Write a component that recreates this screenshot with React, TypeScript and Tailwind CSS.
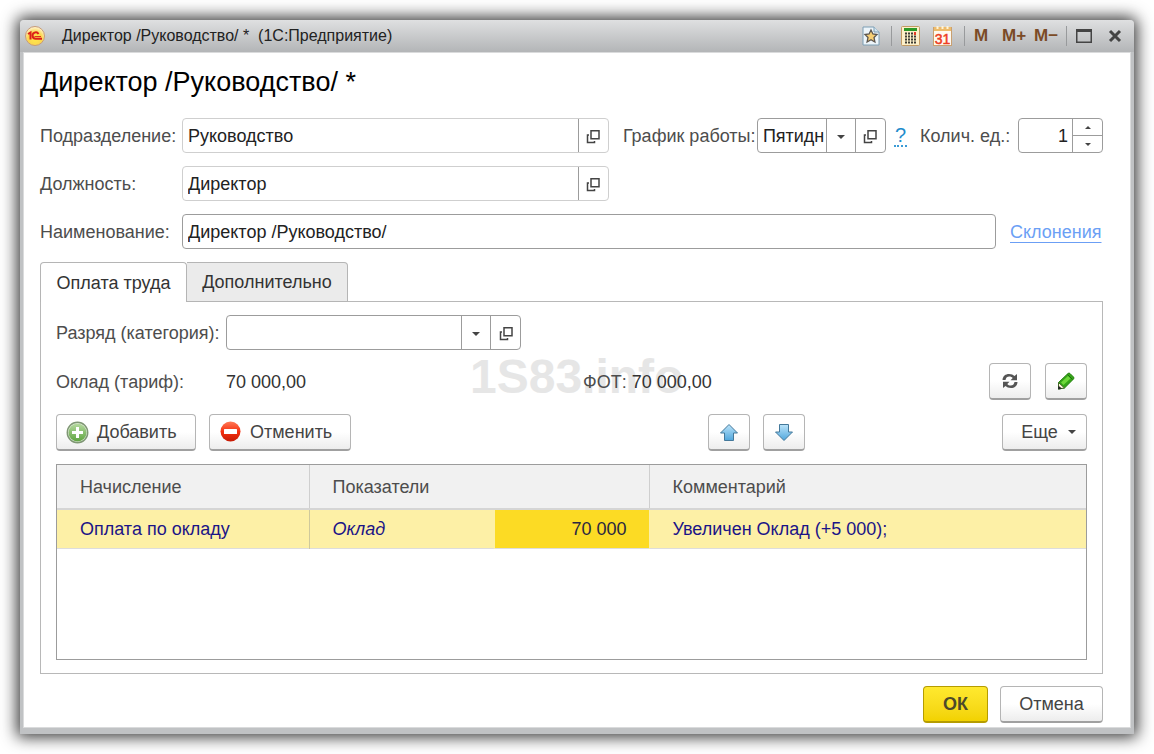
import React from 'react';

const FIELD = 'flex h-[35px] rounded-[4px] border bg-white text-[#222]';
const BUTTON =
  'flex h-[37px] items-center rounded-[4px] border border-[#b5b5b5] border-b-2 border-b-[#a0a0a0] bg-gradient-to-b from-white from-50% to-[#ededed] text-[#444]';

export default function App() {
  return (
    <div className="bg-white p-5 font-['Liberation_Sans',Arial,sans-serif] text-[18px] leading-[22px] text-[#4d4d4d]">
      <div className="rounded-t-[4px] bg-[#c0c2c4] px-[3px] pb-[6px] shadow-[0_0_16px_3px_rgba(0,0,0,0.8)]">
        <TitleBar />

        <main className="border border-[#dadbdc] bg-white pr-[27px] pb-1 pl-4">
          <h1 className="pt-[13px] text-[27px] leading-8 text-black">Директор /Руководство/ *</h1>

          {/* Position fields */}
          <div className="mt-5 flex">
            <div className="flex flex-1 flex-col gap-[13px]">
              <div className="flex items-center">
                <label htmlFor="department" className="w-[142px]">Подразделение:</label>
                <OpenField id="department" value="Руководство" />
              </div>
              <div className="flex items-center">
                <label htmlFor="position" className="w-[142px]">Должность:</label>
                <OpenField id="position" value="Директор" />
              </div>
            </div>
            <div className="flex h-[35px] items-center">
              <label htmlFor="schedule" className="ml-[14px] w-[134px]">График работы:</label>
              <div className={`${FIELD} w-[129px] border-[#9c9c9c]`}>
                <Dropdown id="schedule" value="Пятидн" />
                <OpenButton label="Открыть график" />
              </div>
              <a href="#help" className="ml-2 border-b-2 border-dotted border-[#3b9bd6] px-px text-[20px] leading-5 text-[#1f8ccc]">?</a>
              <label htmlFor="count" className="ml-[13px] w-[98px]">Колич. ед.:</label>
              <div className={`${FIELD} w-[85px] border-[#9c9c9c]`}>
                <input id="count" type="text" defaultValue="1" className="w-full min-w-0 flex-1 px-1 text-right outline-none" />
                <div className="flex w-[30px] flex-col border-l border-[#9c9c9c]">
                  <button aria-label="Больше" className="flex flex-1 items-center justify-center border-b border-[#9c9c9c]">
                    <svg width="6" height="3" viewBox="0 0 6 3"><path d="M0 3L3 0L6 3Z" fill="#444" /></svg>
                  </button>
                  <button aria-label="Меньше" className="flex flex-1 items-center justify-center">
                    <svg width="6" height="3" viewBox="0 0 6 3"><path d="M0 0L3 3L6 0Z" fill="#444" /></svg>
                  </button>
                </div>
              </div>
            </div>
          </div>

          <div className="mt-[13px] flex items-center">
            <label htmlFor="name" className="w-[142px]">Наименование:</label>
            <div className={`${FIELD} flex-1 border-[#9c9c9c]`}>
              <input id="name" type="text" defaultValue="Директор /Руководство/" className="w-full rounded-[4px] px-[5px] outline-none" />
            </div>
            <a href="#declension" className="ml-[14px] w-[93px] text-[#6b9ff5] underline underline-offset-4">Склонения</a>
          </div>

          {/* Tabs */}
          <div role="tablist" className="relative mt-[13px] -mb-px flex h-10 text-[#333]">
            <button role="tab" aria-selected="true" className="w-[147px] rounded-t-[4px] border border-b-0 border-[#b5b5b5] bg-white">
              Оплата труда
            </button>
            <button role="tab" aria-selected="false" className="w-[161px] rounded-tr-[4px] border border-l-0 border-[#b5b5b5] bg-[#ebebeb]">
              Дополнительно
            </button>
          </div>

          <section className="border border-[#b8b8b8] px-[15px] pt-[13px] pb-[13px]">
            <div className="flex items-center">
              <label htmlFor="grade" className="w-[170px]">Разряд (категория):</label>
              <div className={`${FIELD} w-[295px] border-[#9c9c9c]`}>
                <Dropdown id="grade" value="" />
                <OpenButton label="Открыть разряд" />
              </div>
            </div>

            <div className="relative mt-[13px] flex items-center">
              <span aria-hidden="true" className="absolute -top-[13px] left-[414px] text-[48px] leading-[54px] font-bold text-[#e6e6e6]">
                1S83.info
              </span>
              <span className="w-[170px]">Оклад (тариф):</span>
              <span className="w-[357px] text-[#333]">70 000,00</span>
              <span className="relative flex-1">
                ФОТ: <span className="text-[#333]">70 000,00</span>
              </span>
              <button aria-label="Обновить" className={`${BUTTON} w-[42px] justify-center`}><RefreshIcon /></button>
              <button aria-label="Изменить" className={`${BUTTON} ml-[14px] w-[42px] justify-center`}><PencilIcon /></button>
            </div>

            <div className="mt-[14px] flex items-center">
              <button className={`${BUTTON} w-[140px] gap-2 pl-[9px]`}><AddIcon />Добавить</button>
              <button className={`${BUTTON} ml-[13px] w-[142px] gap-2 pl-[9px]`}><CancelIcon />Отменить</button>
              <div className="flex flex-1 justify-end gap-[13px] pr-[197px]">
                <button aria-label="Вверх" className={`${BUTTON} w-[42px] justify-center`}><ArrowIcon /></button>
                <button aria-label="Вниз" className={`${BUTTON} w-[42px] justify-center`}><ArrowIcon down /></button>
              </div>
              <button className={`${BUTTON} w-[85px] justify-center gap-[10px] pl-2`}>Еще<Caret /></button>
            </div>

            {/* Accruals */}
            <div className="mt-[13px] h-[196px] border border-[#9c9c9c] bg-white">
              <table className="w-full table-fixed border-collapse text-left">
                <colgroup>
                  <col className="w-[252px]" />
                  <col className="w-[185px]" />
                  <col className="w-[155px]" />
                  <col />
                </colgroup>
                <thead>
                  <tr className="h-[44px] border-b-2 border-[#d5d5d5] bg-[#f1f1f1]">
                    <th className="border-r border-[#cfcfcf] pl-[23px] font-normal">Начисление</th>
                    <th colSpan={2} className="border-r border-[#cfcfcf] pl-[23px] font-normal">Показатели</th>
                    <th className="pl-[23px] font-normal">Комментарий</th>
                  </tr>
                </thead>
                <tbody>
                  <tr className="h-[39px] border-b border-[#dddddd] bg-[#fdf0a6] text-[#1b1487]">
                    <td className="border-r border-[#cfc99c] pl-[23px]">Оплата по окладу</td>
                    <td className="pl-[23px] italic">Оклад</td>
                    <td className="border-x border-[#fdf0a6] bg-[#fcdb24] pr-[22px] text-right text-[#2b2740]">70 000</td>
                    <td className="pl-[23px]">Увеличен Оклад (+5 000);</td>
                  </tr>
                </tbody>
              </table>
            </div>
          </section>

          <div className="mt-3 flex justify-end gap-3">
            <button className="h-[37px] w-[65px] rounded-[4px] border border-b-2 border-[#b59c00] bg-gradient-to-b from-[#ffe92e] to-[#f2d200] font-bold text-[#4d4a2a]">
              ОК
            </button>
            <button className={`${BUTTON} w-[103px] justify-center`}>Отмена</button>
          </div>
        </main>
      </div>
    </div>
  );
}

function TitleBar() {
  return (
    <header className="-mx-[3px] flex h-8 items-center rounded-t-[4px] bg-gradient-to-b from-[#dfe0e1] to-[#b3b5b7] pr-3 pl-1 text-[#222]">
      <svg width="22" height="22" viewBox="0 0 22 22">
        <defs>
          <radialGradient id="logo" cx="50%" cy="65%" r="60%">
            <stop offset="0" stopColor="#ffe94a" />
            <stop offset="0.6" stopColor="#fbd64e" />
            <stop offset="1" stopColor="#fff1c4" />
          </radialGradient>
        </defs>
        <circle cx="11" cy="11" r="9.5" fill="url(#logo)" stroke="#c79a78" />
        <path d="M4 9L6.500 7.500V14.500" fill="none" stroke="#dc1f1a" strokeWidth="2" />
        <path d="M14.500 9A3.200 3.200 0 1 0 12 13.800H18" fill="none" stroke="#dc1f1a" strokeWidth="2" />
        <path d="M10.500 11.600H17" stroke="#dc1f1a" strokeWidth="1" />
      </svg>
      <span className="ml-4 flex-1 text-[16px] whitespace-pre">Директор /Руководство/ *  (1С:Предприятие)</span>

      <div className="flex items-center">
        <button aria-label="В избранное">
          <svg width="18" height="20" viewBox="0 0 18 20">
            <path d="M1 1H12L17 6V19H1Z" fill="#edf5fa" stroke="#7c9eb4" />
            <path d="M12 1V6H17" fill="#d5e6f0" stroke="#7c9eb4" />
            <path d="M9 4L10.900 8L15 8.500L12 11.500L12.900 16L9 13.700L5.100 16L6 11.500L3 8.500L7.100 8Z" fill="#f7cf74" stroke="#5c5650" strokeWidth="1.300" />
          </svg>
        </button>
        <Divider className="ml-[11px] mr-[9px]" />
        <button aria-label="Калькулятор">
          <svg width="19" height="20" viewBox="0 0 19 20">
            <rect x="0.500" y="0.500" width="18" height="19" rx="1" fill="#fdf0c9" stroke="#c39b63" />
            <rect x="3" y="2" width="13" height="3" fill="#2b9926" />
            <path d="M4 7.500H12M4 10.500H15M4 13.500H15M4 16.500H15" stroke="#3d3d35" strokeWidth="2" strokeDasharray="2 1" />
            <rect x="13" y="6" width="2" height="3" fill="#e33d24" />
          </svg>
        </button>
        <button aria-label="Календарь" className="ml-[13px]">
          <svg width="19" height="20" viewBox="0 0 19 20">
            <rect x="0.500" y="1.500" width="18" height="18" fill="#fffaf0" stroke="#c9a071" />
            <rect x="1" y="1" width="17" height="4" fill="#edbb6a" />
            <path d="M4.500 0V3M9.500 0V3M14.500 0V3" stroke="#fff3d6" strokeWidth="2" />
            <text x="9.500" y="17.500" textAnchor="middle" fontSize="14" fontFamily="Liberation Sans" fill="#ee3d22" stroke="#ee3d22" strokeWidth="0.500">31</text>
          </svg>
        </button>
        <Divider className="ml-3 mr-[9px]" />
        <button className="w-5 text-left text-[17px] font-bold text-[#7b4b27]">M</button>
        <button className="ml-2 w-7 text-left text-[17px] font-bold text-[#7b4b27]">M+</button>
        <button className="ml-1 w-6 text-left text-[17px] font-bold whitespace-nowrap text-[#7b4b27]">M−</button>
        <Divider className="ml-2 mr-[9px]" />
        <button aria-label="Развернуть">
          <svg width="16" height="14" viewBox="0 0 16 14">
            <path d="M0.750 1V13.250H15.250V1" fill="none" stroke="#444" strokeWidth="1.500" />
            <path d="M0 1.500H16" stroke="#444" strokeWidth="3" />
          </svg>
        </button>
        <button aria-label="Закрыть" className="ml-4">
          <svg width="14" height="14" viewBox="0 0 14 14">
            <path d="M2 2L12 12M12 2L2 12" stroke="#444" strokeWidth="3" />
          </svg>
        </button>
      </div>
    </header>
  );
}

function Divider({ className }: { className: string }) {
  return <span className={`h-5 w-px bg-[#989a9c] ${className}`} />;
}

function OpenField({ id, value }: { id: string; value: string }) {
  return (
    <div className={`${FIELD} flex-1 border-[#cfcfcf]`}>
      <input id={id} type="text" defaultValue={value} className="w-full min-w-0 flex-1 rounded-l-[4px] px-[5px] outline-none" />
      <OpenButton label="Открыть" />
    </div>
  );
}

function OpenButton({ label }: { label: string }) {
  return (
    <button aria-label={label} className="flex w-[30px] shrink-0 items-center justify-center border-l border-[#9c9c9c] pt-[3px]">
      <svg width="14" height="14" viewBox="0 0 14 14" fill="none" stroke="#444" strokeWidth="1.500">
        <rect x="5" y="0.750" width="8" height="8" />
        <path d="M3 5H1.500V12.500H8.500V11" />
      </svg>
    </button>
  );
}

function Dropdown({ id, value }: { id: string; value: string }) {
  return (
    <div className="relative min-w-0 flex-1">
      <select id={id} defaultValue={value} className="h-full w-full appearance-none rounded-l-[4px] pr-[29px] pl-[5px] outline-none">
        <option value={value}>{value}</option>
      </select>
      <span className="pointer-events-none absolute inset-y-0 right-0 flex w-[29px] items-center justify-center border-l border-[#9c9c9c] pt-[3px]">
        <Caret />
      </span>
    </div>
  );
}

function Caret() {
  return (
    <svg width="8" height="4" viewBox="0 0 8 4">
      <path d="M0 0H8L4 4Z" fill="#444" />
    </svg>
  );
}

function RefreshIcon() {
  return (
    <svg width="16" height="16" viewBox="0 0 16 16">
      <path d="M0.500 7C0.800 3 3.500 1 7 1C9.500 1 11.200 1.800 12.500 3L15 1V7.200H8.500L10.700 5C9.800 4 8.700 3.500 7.300 3.500C5.200 3.500 4 4.500 3.500 7Z" fill="#555" />
      <path d="M15.500 9C15.200 13 12.500 15 9 15C6.500 15 4.800 14.200 3.500 13L1 15V8.800H7.500L5.300 11C6.200 12 7.300 12.500 8.700 12.500C10.800 12.500 12 11.500 12.500 9Z" fill="#555" />
    </svg>
  );
}

function PencilIcon() {
  return (
    <svg width="18" height="18" viewBox="0 0 18 18">
      <path d="M1.500 10.500L11 1.500Q12 0.500 13 1.500L16.500 5Q17.500 6 16.500 7L7.500 16L1.500 17Z" fill="#35a518" stroke="#25820f" />
      <path d="M4 10.500L11 4L13.500 6.500L6.500 13Z" fill="#6fd83a" />
      <path d="M1.500 10.500L7.500 16L1.500 17Z" fill="#fff3dd" stroke="#3f6b25" />
      <path d="M1 17.500L1.500 13.800L5 16.600Z" fill="#222" />
      <path d="M10.500 2.500L15.500 7.500" stroke="#1c6e0c" />
    </svg>
  );
}

function AddIcon() {
  return (
    <svg width="23" height="23" viewBox="0 0 23 23">
      <defs>
        <linearGradient id="add" x1="0" y1="0" x2="0" y2="1">
          <stop offset="0" stopColor="#b5d9a0" />
          <stop offset="1" stopColor="#5fa540" />
        </linearGradient>
      </defs>
      <circle cx="11.500" cy="11.500" r="10.200" fill="#e6f0df" stroke="#7f9774" strokeWidth="1.500" />
      <circle cx="11.500" cy="11.500" r="9" fill="url(#add)" />
      <path d="M11.500 6V17M6 11.500H17" stroke="#fff" strokeWidth="3" />
    </svg>
  );
}

function CancelIcon() {
  return (
    <svg width="23" height="23" viewBox="0 0 23 23">
      <defs>
        <linearGradient id="cancel" x1="0" y1="0" x2="0" y2="1">
          <stop offset="0" stopColor="#ff7a58" />
          <stop offset="0.5" stopColor="#f5300f" />
          <stop offset="1" stopColor="#c61a04" />
        </linearGradient>
      </defs>
      <circle cx="11.500" cy="10.500" r="10" fill="url(#cancel)" />
      <rect x="5" y="8" width="13" height="5" rx="0.500" fill="#fff" />
    </svg>
  );
}

function ArrowIcon({ down }: { down?: boolean }) {
  return (
    <svg width="20" height="19" viewBox="0 0 20 19">
      <defs>
        <linearGradient id="arrow" x1="0" y1="0" x2="0" y2="1">
          <stop offset="0" stopColor="#bce4fa" />
          <stop offset="1" stopColor="#4fa6dc" />
        </linearGradient>
      </defs>
      {down ? (
        <path d="M5.500 1.500H14.500V9H18.500L10 17.500L1.500 9H5.500Z" fill="url(#arrow)" stroke="#44789a" strokeLinejoin="round" />
      ) : (
        <path d="M5.500 17.500H14.500V10H18.500L10 1.500L1.500 10H5.500Z" fill="url(#arrow)" stroke="#44789a" strokeLinejoin="round" />
      )}
    </svg>
  );
}
